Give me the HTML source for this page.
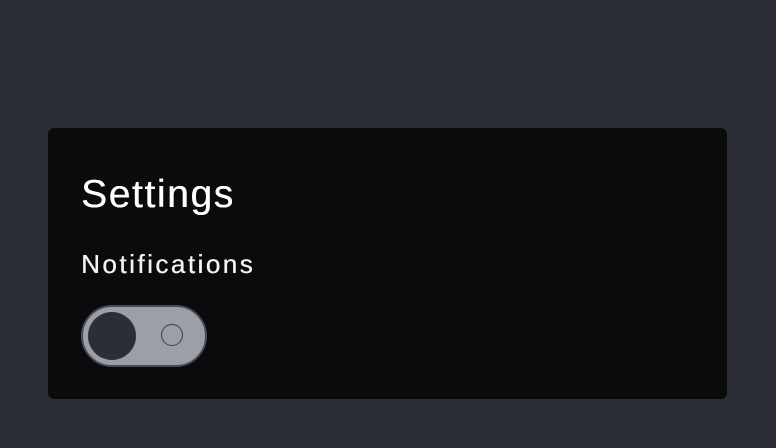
<!DOCTYPE html>
<html><head><style>
html,body{margin:0;padding:0;width:776px;height:448px;background:#2b2e35;overflow:hidden;font-family:"Liberation Sans",sans-serif}
.card{position:absolute;left:48px;top:128px;width:679px;height:271px;background:#0b0b0b;border-radius:6px}
.h{position:absolute;left:81px;top:171px;color:#fff;font-size:39px;line-height:48px;letter-spacing:1.6px;margin:0;text-shadow:0.4px 0 0 #fff}
.n{position:absolute;left:81px;top:248px;color:#f2f2f2;font-size:26px;line-height:32px;letter-spacing:2.5px;text-shadow:0.4px 0 0 #f2f2f2}
.t{position:absolute;left:81px;top:305px;width:122px;height:58px;border:2px solid #4a4d55;border-radius:32px;background:#9ba0a8}
.k{position:absolute;left:88px;top:312px;width:48px;height:48px;border-radius:50%;background:#2b2e35}
.o{position:absolute;left:161px;top:324px;width:20px;height:20px;border:1.6px solid #3a3d45;border-radius:50%}
</style></head><body>
<div class="card"></div>
<div class="h">Settings</div>
<div class="n">Notifications</div>
<div class="t"></div><div class="k"></div><div class="o"></div>
</body></html>
